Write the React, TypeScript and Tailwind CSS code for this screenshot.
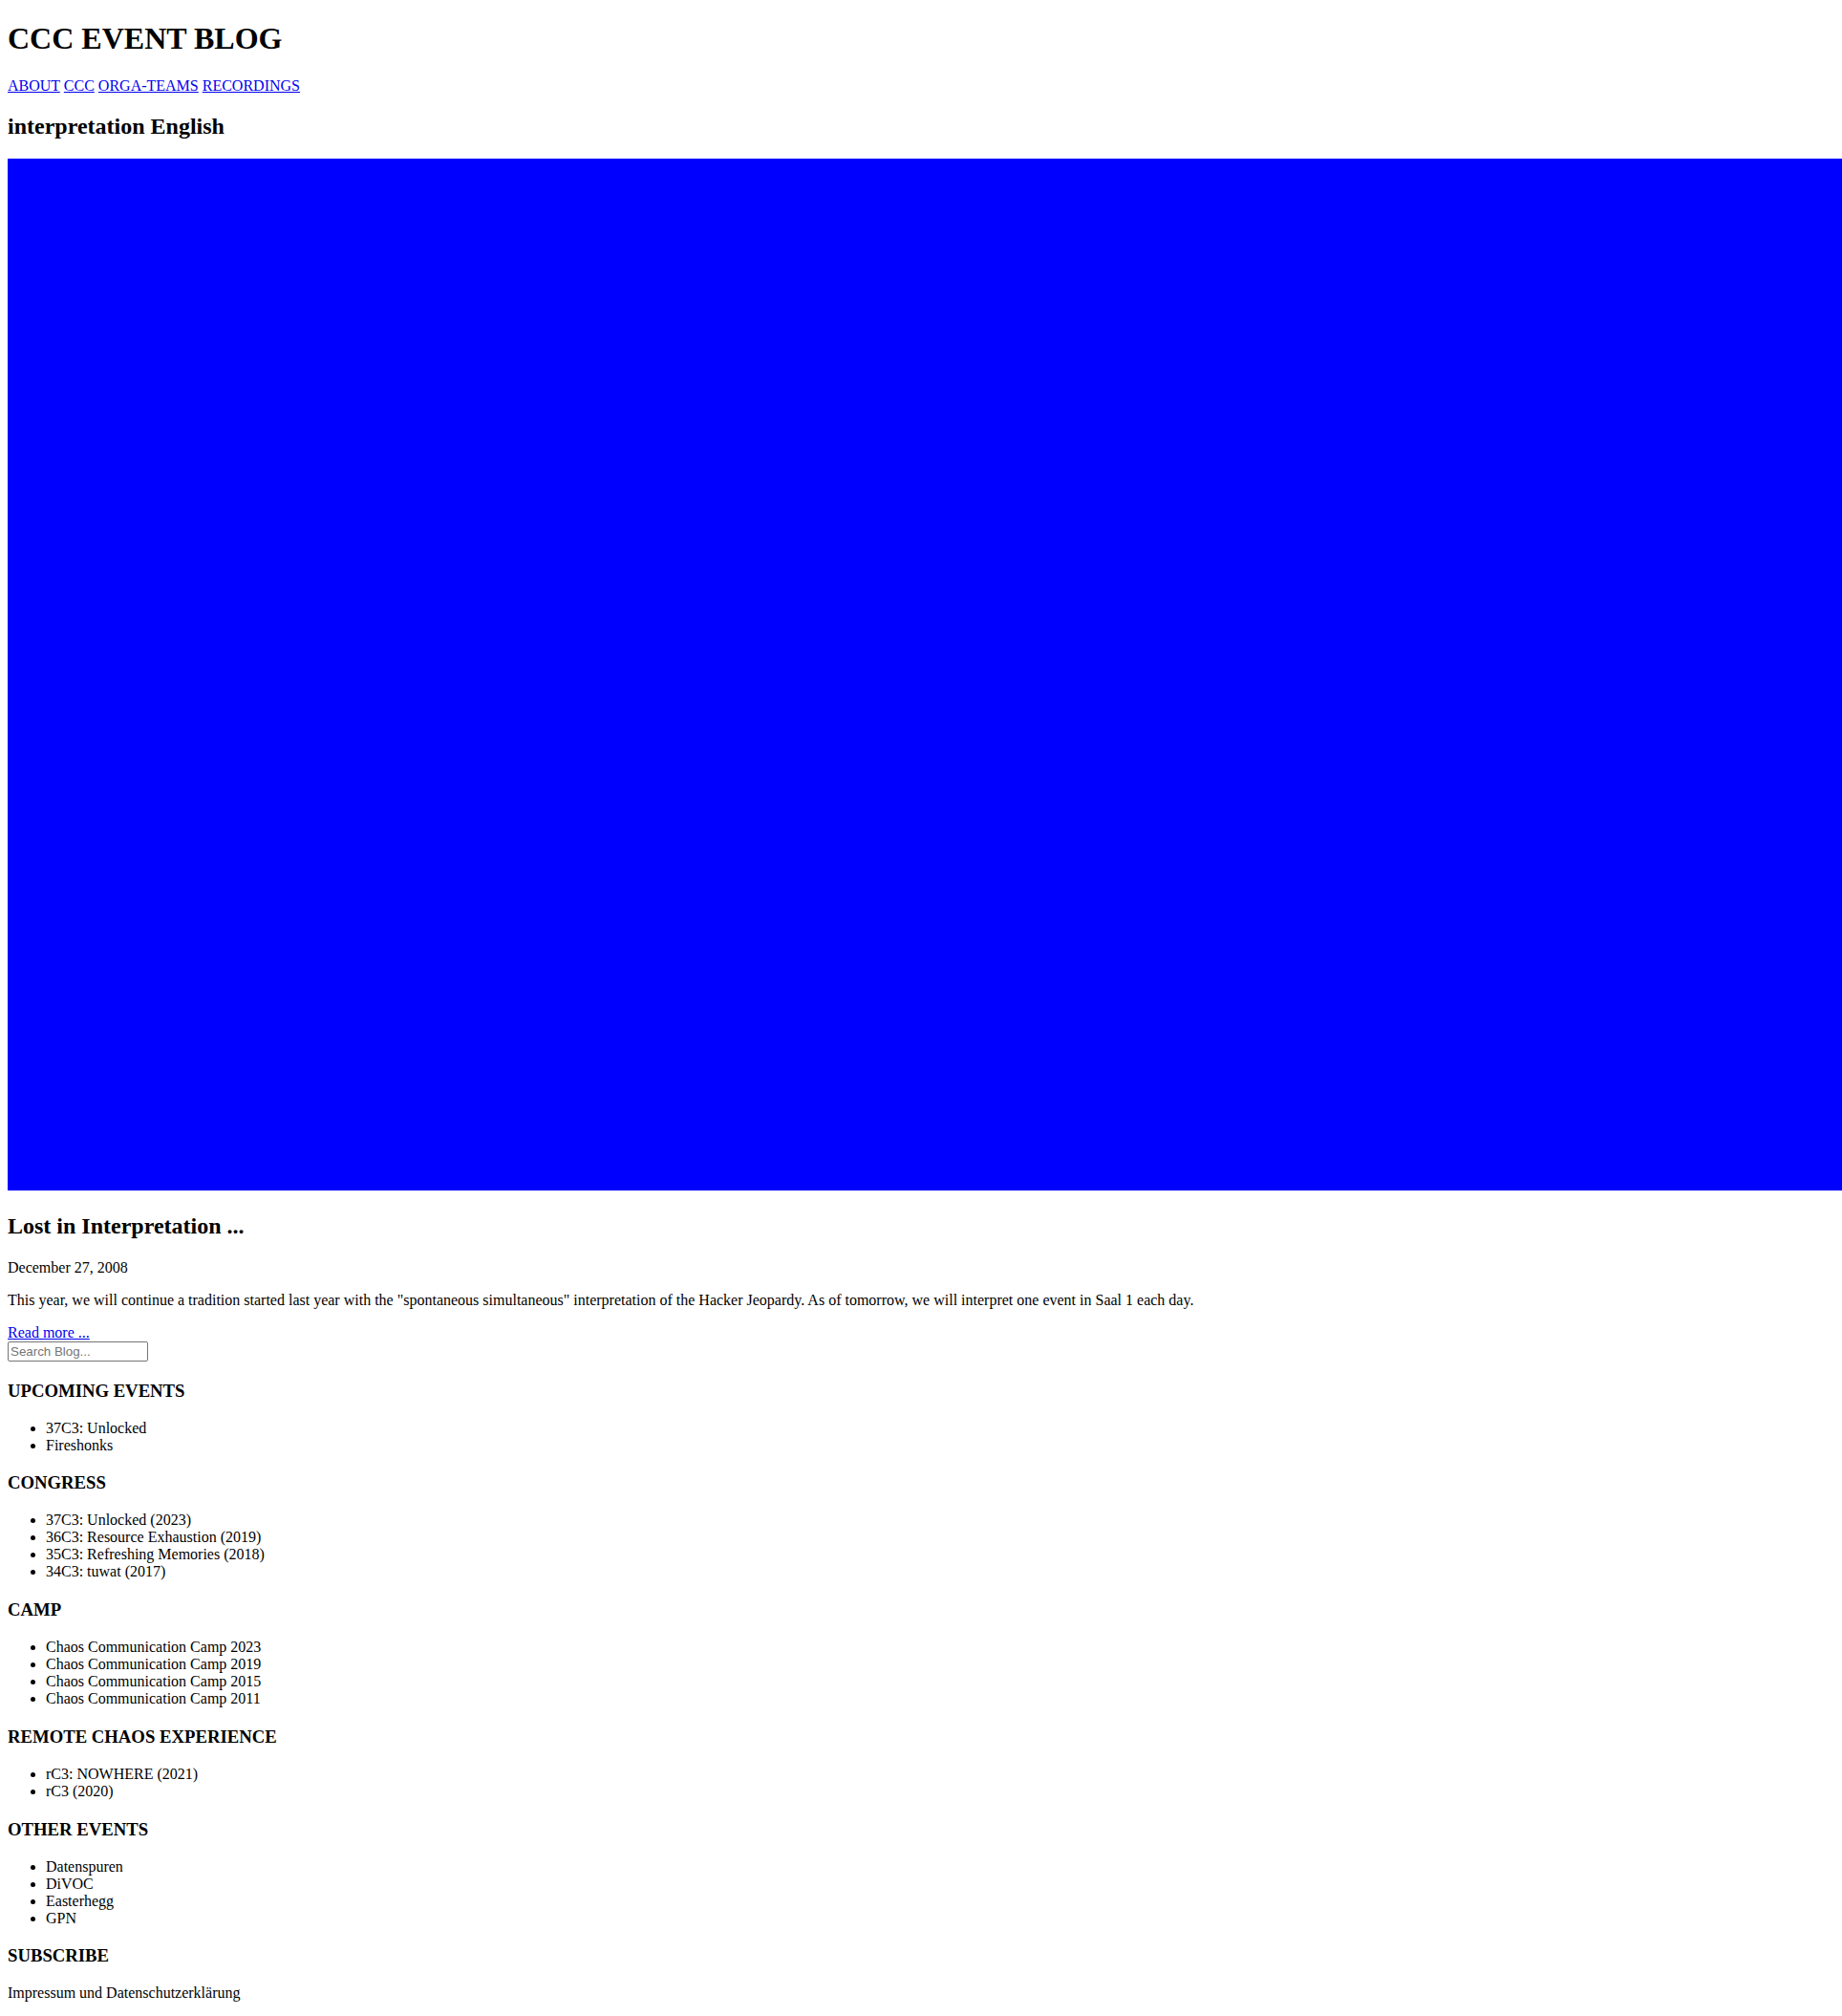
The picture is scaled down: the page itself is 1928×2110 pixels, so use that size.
import React from "react";

const sections: { title: string; items: string[] }[] = [
  { title: "UPCOMING EVENTS", items: ["37C3: Unlocked", "Fireshonks"] },
  {
    title: "CONGRESS",
    items: [
      "37C3: Unlocked (2023)",
      "36C3: Resource Exhaustion (2019)",
      "35C3: Refreshing Memories (2018)",
      "34C3: tuwat (2017)",
    ],
  },
  {
    title: "CAMP",
    items: [
      "Chaos Communication Camp 2023",
      "Chaos Communication Camp 2019",
      "Chaos Communication Camp 2015",
      "Chaos Communication Camp 2011",
    ],
  },
  { title: "REMOTE CHAOS EXPERIENCE", items: ["rC3: NOWHERE (2021)", "rC3 (2020)"] },
  { title: "OTHER EVENTS", items: ["Datenspuren", "DiVOC", "Easterhegg", "GPN"] },
];

export default function App() {
  return (
    <div className="m-2 text-black text-[16px] leading-[normal] font-['Liberation_Serif','Times_New_Roman',serif]">
      <h1 className="text-[32px] leading-[38px] font-bold my-[21.44px]">CCC EVENT BLOG</h1>
      <p className="my-4">
        <a href="#" className="text-[#0000ee] underline">ABOUT</a>{" "}
        <a href="#" className="text-[#0000ee] underline">CCC</a>{" "}
        <a href="#" className="text-[#0000ee] underline">ORGA-TEAMS</a>{" "}
        <a href="#" className="text-[#0000ee] underline">RECORDINGS</a>
      </p>
      <h2 className="text-[24px] leading-[27.75px] font-bold my-[19.92px]">interpretation English</h2>
      <div>
        <span className="inline-block align-baseline w-[1920px] h-[1080px] bg-[#0000ff]" />
      </div>
      <h2 className="text-[24px] leading-[27.75px] font-bold my-[19.92px]">Lost in Interpretation ...</h2>
      <p className="my-4">December 27, 2008</p>
      <p className="my-4">
        This year, we will continue a tradition started last year with the "spontaneous simultaneous"
        interpretation of the Hacker Jeopardy. As of tomorrow, we will interpret one event in Saal 1 each day.
      </p>
      <a href="#" className="text-[#0000ee] underline">Read more ...</a>
      <form>
        <input
          type="text"
          placeholder="Search Blog..."
          className="block w-[147px] h-[21px] border border-[#767676] rounded-[2px] px-[2px] py-[1px] text-[13.33px] bg-white text-black font-['Liberation_Sans',Arial,sans-serif] placeholder:text-[#757575]"
        />
      </form>
      {sections.map((s) => (
        <div key={s.title}>
          <h3 className="text-[18.72px] leading-[23.3px] font-bold my-[18.72px]">{s.title}</h3>
          <ul className="list-disc pl-10 my-4">
            {s.items.map((it) => (
              <li key={it}>{it}</li>
            ))}
          </ul>
        </div>
      ))}
      <h3 className="text-[18.72px] leading-[23.3px] font-bold my-[18.72px]">SUBSCRIBE</h3>
      <p className="my-4">Impressum und Datenschutzerklärung</p>
    </div>
  );
}
